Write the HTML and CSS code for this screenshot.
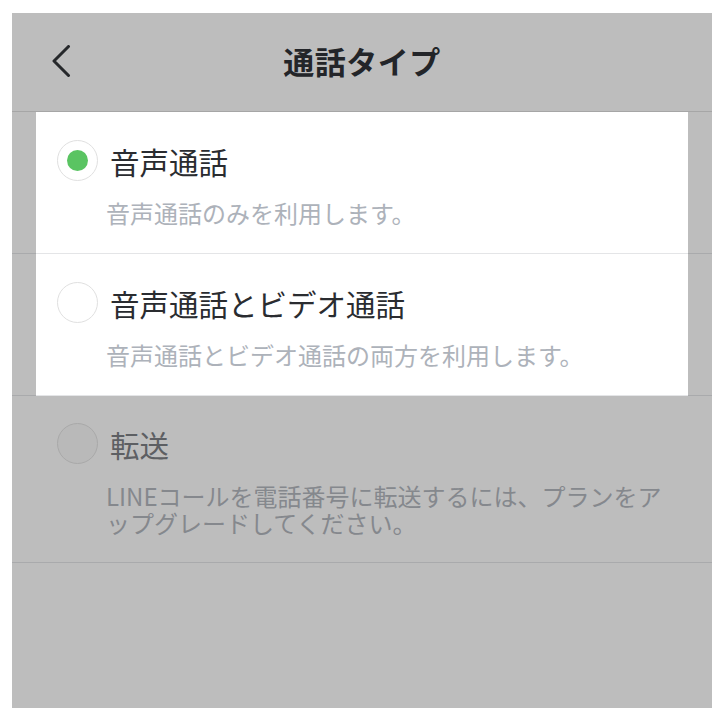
FILE: index.html
```html
<!DOCTYPE html>
<html lang="ja">
<head>
<meta charset="utf-8">
<title>通話タイプ</title>
<link rel="stylesheet" href="styles.css">
</head>
<body>
<div class="screen">
  <header class="header">
    <div class="back">
      <svg width="20" height="32" viewBox="0 0 20 32" aria-hidden="true">
        <path d="M17.5 1.5 L3 16 L17.5 30.5" fill="none" stroke="#26282b" stroke-width="3" stroke-linecap="round" stroke-linejoin="round"/>
      </svg>
    </div>
    <h1 class="title">通話タイプ</h1>
    <div></div>
  </header>

  <div class="row spot">
    <div class="row-inner">
      <span class="radio on"></span>
      <div class="texts">
        <div class="name">音声通話</div>
        <div class="desc">音声通話のみを利用します。</div>
      </div>
    </div>
  </div>

  <div class="row spot">
    <div class="row-inner">
      <span class="radio"></span>
      <div class="texts">
        <div class="name">音声通話とビデオ通話</div>
        <div class="desc">音声通話とビデオ通話の両方を利用します。</div>
      </div>
    </div>
  </div>

  <div class="row dim">
    <div class="row-inner">
      <span class="radio"></span>
      <div class="texts">
        <div class="name">転送</div>
        <div class="desc">LINEコールを電話番号に転送するには、プランをア<br>ップグレードしてください。</div>
      </div>
    </div>
  </div>
</div>
</body>
</html>
```

FILE: styles.css
```css
html, body {
  margin: 0;
  padding: 0;
  background: #ffffff;
}

body {
  font-family: "Noto Sans CJK JP", "Noto Sans", sans-serif;
}

.screen {
  width: 700px;
  height: 695px;
  margin: 13px 12px;
  background: #bdbdbd;
  overflow: hidden;
}

.header {
  box-sizing: border-box;
  height: 99px;
  border-bottom: 1px solid #a6a6a6;
  display: grid;
  grid-template-columns: 1fr auto 1fr;
  align-items: center;
}

.back {
  padding-left: 39px;
  display: flex;
  align-items: center;
}

.back svg {
  display: block;
  margin-top: -3px;
}

.title {
  margin: 0;
  font-size: 31px;
  font-weight: 700;
  color: #232529;
  letter-spacing: 0.5px;
  line-height: 40px;
  margin-top: -3px;
}

.row {
  border-bottom: 1px solid #a9aaac;
}

.row-inner {
  display: flex;
  align-items: flex-start;
  padding: 29px 0 27px 45px;
}

.spot .row-inner {
  margin: 0 24px -1px;
  padding-left: 21px;
  background: #ffffff;
  border-bottom: 1px solid #e4e5e7;
}

.dim .row-inner {
  padding-top: 28px;
  padding-bottom: 26px;
}

.radio {
  box-sizing: border-box;
  flex: none;
  width: 41px;
  height: 41px;
  border-radius: 50%;
  border: 1.5px solid #e0e0e0;
  background: #ffffff;
  display: flex;
  align-items: center;
  justify-content: center;
  margin-top: -1px;
}

.radio.on::after {
  content: "";
  width: 21px;
  height: 21px;
  border-radius: 50%;
  background: #5ac462;
}

.texts {
  margin-left: 8px;
}

.name {
  font-size: 29.5px;
  line-height: 40px;
  color: #2a2c30;
  padding-left: 4px;
}

.desc {
  margin-top: 18px;
  font-size: 24px;
  line-height: 27px;
  color: #adb2ba;
}

.dim .radio {
  background: #b9b9b9;
  border-color: #a9a9a9;
}

.dim .name {
  color: #5d5f63;
}

.dim .desc {
  color: #85888d;
}
```
